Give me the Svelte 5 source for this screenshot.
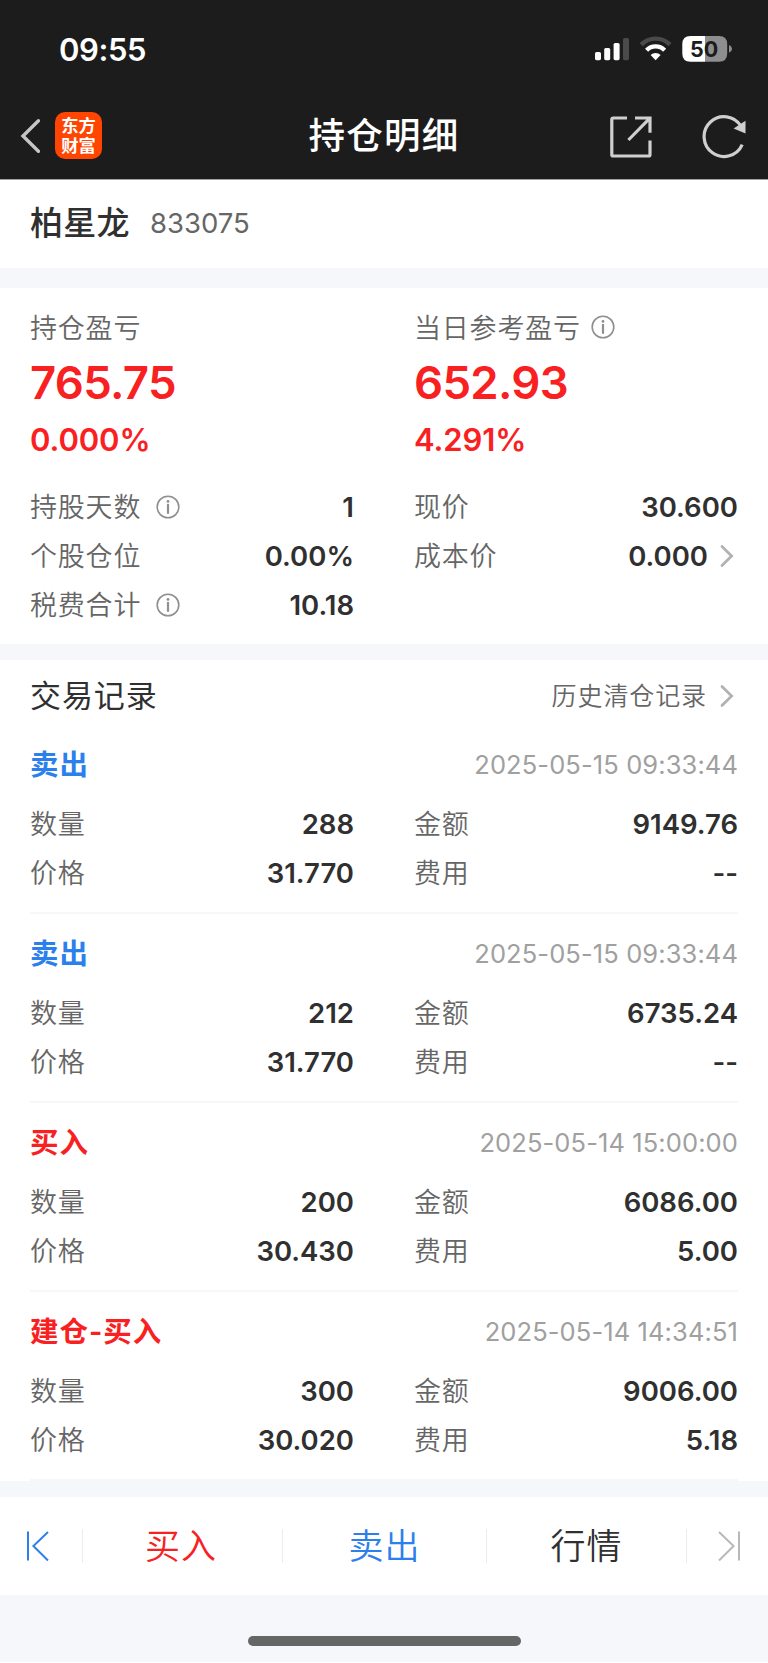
<script>
  const profits = [
    { label: '持仓盈亏', value: '765.75', percent: '0.000%', info: false },
    { label: '当日参考盈亏', value: '652.93', percent: '4.291%', info: true }
  ];

  const facts = [
    { label: '持股天数', value: '1', info: true },
    { label: '现价', value: '30.600' },
    { label: '个股仓位', value: '0.00%' },
    { label: '成本价', value: '0.000', link: true },
    { label: '税费合计', value: '10.18', info: true }
  ];

  const records = [
    { type: '卖出', side: 'sell', time: '2025-05-15 09:33:44', count: '288', amount: '9149.76', price: '31.770', fee: '--' },
    { type: '卖出', side: 'sell', time: '2025-05-15 09:33:44', count: '212', amount: '6735.24', price: '31.770', fee: '--' },
    { type: '买入', side: 'buy', time: '2025-05-14 15:00:00', count: '200', amount: '6086.00', price: '30.430', fee: '5.00' },
    { type: '建仓-买入', side: 'buy', time: '2025-05-14 14:34:51', count: '300', amount: '9006.00', price: '30.020', fee: '5.18' }
  ];
</script>

{#snippet infoIcon()}
  <svg class="info" width="24" height="24" viewBox="0 0 24 24" fill="none" stroke="#8f8f8f">
    <circle cx="12" cy="12" r="10.8" stroke-width="1.6" />
    <path d="M12 9.8V18" stroke-width="2.2" stroke-linecap="round" />
    <circle cx="12" cy="6.4" r="1.4" fill="#8f8f8f" stroke="none" />
  </svg>
{/snippet}

{#snippet chevron()}
  <svg class="chevron" width="14" height="24" viewBox="0 0 14 24" fill="none" stroke="#b2b2b2" stroke-width="2.8">
    <path d="M2 2.4L11.6 12L2 21.6" stroke-linecap="round" />
  </svg>
{/snippet}

{#snippet pair(label, value)}
  <div class="pair"><span class="label">{label}</span><b>{value}</b></div>
{/snippet}

<div class="page">
  <header>
    <div class="status">
      <span class="clock">09:55</span>
      <svg width="138" height="28" viewBox="595 35 138 28">
        <g fill="#fff">
          <rect x="595" y="52" width="6" height="8.2" rx="1.6" />
          <rect x="604.2" y="48" width="6" height="12.2" rx="1.6" />
          <rect x="613.6" y="43" width="6" height="17.2" rx="1.6" />
        </g>
        <rect x="623" y="38" width="6" height="22.2" rx="1.6" fill="#4a4a4a" />
        <g fill="none" stroke-width="4.4">
          <path d="M641.2 44.6A20.3 20.3 0 0 1 670 44.6" stroke="#4a4a4a" />
          <path d="M646.6 50.2A12.6 12.6 0 0 1 664.6 50.2" stroke="#fff" />
        </g>
        <path d="M655.6 60.2L650.6 55.1A7.2 7.2 0 0 1 660.6 55.1Z" fill="#fff" />
        <path d="M705 36H690.5Q682.3 36 682.3 44.2V53.5Q682.3 61.7 690.5 61.7H705Z" fill="#fff" />
        <path d="M705 36H719Q727.2 36 727.2 44.2V53.5Q727.2 61.7 719 61.7H705Z" fill="#8e8e8e" />
        <path d="M729 45Q732 46.3 732 48.9T729 52.8Z" fill="#8e8e8e" />
        <text x="704.2" y="56.6" text-anchor="middle" font-family="Inter" font-size="21.5" font-weight="700" fill="#1c1c1c">50</text>
      </svg>
    </div>
    <div class="titlebar">
      <div class="back">
        <svg width="20" height="36" viewBox="0 0 20 36" fill="none" stroke="#c6c6c6" stroke-width="3.4">
          <path d="M18.4 2.8L3 18L18.4 33.2" stroke-linecap="round" />
        </svg>
        <span class="logo">东方<br />财富</span>
      </div>
      <h1>持仓明细</h1>
      <div class="tools">
        <svg width="42" height="42" viewBox="0 0 42 42" fill="none" stroke="#cfcfcf" stroke-width="3.2">
          <path d="M17 2H3.4Q1.8 2 1.8 3.6V38.4Q1.8 40 3.4 40H38.4Q40 40 40 38.4V24.4" />
          <path d="M25 2H40V16.8M39.4 2.6L18.4 24" />
        </svg>
        <svg width="44" height="44" viewBox="702 115 44 44">
          <path d="M742.2 144.6A19.9 19.9 0 1 1 741 126.2" fill="none" stroke="#cfcfcf" stroke-width="3.2" />
          <path d="M745.5 120.8V133.4L733.6 128.6Z" fill="#cfcfcf" />
        </svg>
      </div>
    </div>
  </header>

  <section class="stock">
    <h2>柏星龙</h2>
    <span class="code">833075</span>
  </section>

  <section class="summary">
    <div class="columns">
      {#each profits as p}
        <div class="profit">
          <div class="caption"><span class="label">{p.label}</span>{#if p.info}{@render infoIcon()}{/if}</div>
          <div class="value">{p.value}</div>
          <div class="percent">{p.percent}</div>
        </div>
      {/each}
    </div>
    <div class="columns facts">
      {#each facts as f}
        <div class="pair">
          <span class="label">{f.label}</span>
          {#if f.info}{@render infoIcon()}{/if}
          <b>{f.value}</b>
          {#if f.link}{@render chevron()}{/if}
        </div>
      {/each}
    </div>
  </section>

  <section class="trades">
    <div class="heading">
      <h3>交易记录</h3>
      <span class="history">历史清仓记录</span>
      {@render chevron()}
    </div>
    {#each records as r}
      <article>
        <div class="top">
          <strong class={r.side}>{r.type}</strong>
          <time>{r.time}</time>
        </div>
        <div class="columns">
          {@render pair('数量', r.count)}
          {@render pair('金额', r.amount)}
          {@render pair('价格', r.price)}
          {@render pair('费用', r.fee)}
        </div>
      </article>
    {/each}
  </section>

  <nav>
    <div class="edge first">
      <svg width="24" height="32" viewBox="0 0 24 32" fill="none" stroke="#2c80ec" stroke-width="2">
        <path d="M2 1.5V30.5M22 2L7.4 16L22 30.5" />
      </svg>
    </div>
    <div class="action buy">买入</div>
    <div class="action sell">卖出</div>
    <div class="action">行情</div>
    <div class="edge last">
      <svg width="24" height="32" viewBox="0 0 24 32" fill="none" stroke="#b8b8b8" stroke-width="2">
        <path d="M22 1.5V30.5M2 2L16.6 16L2 30.5" />
      </svg>
    </div>
  </nav>
  <footer><i></i></footer>
</div>

<style>
  :global(body) {
    background: #fff;
  }
  .page {
    width: 768px;
    height: 1663px;
    box-sizing: border-box;
    display: flex;
    flex-direction: column;
    font-family: Inter, 'Noto Sans CJK SC', sans-serif;
    color: #303030;
    overflow: hidden;
  }
  h1, h2, h3 {
    margin: 0;
  }
  svg {
    flex: none;
    display: block;
  }
  header {
    height: 180px;
    box-sizing: border-box;
    flex: none;
    background: #1c1c1c;
    border-bottom: 1px solid #a0a0a0;
    color: #fff;
  }
  .status {
    height: 98px;
    display: flex;
    align-items: center;
    justify-content: space-between;
    padding: 0 35px 0 59px;
  }
  .clock {
    font-size: 31px;
    font-weight: 600;
    letter-spacing: -0.4px;
  }
  .titlebar {
    height: 77px;
    display: grid;
    grid-template-columns: 1fr auto 1fr;
    align-items: center;
    padding: 0 22px 0 20px;
  }
  .back {
    display: flex;
    align-items: center;
    gap: 15px;
    padding-bottom: 2px;
  }
  .logo {
    width: 47px;
    height: 47px;
    box-sizing: border-box;
    padding-top: 4px;
    border-radius: 10px;
    background: #ff4500;
    text-align: center;
    font-family: 'Liberation Sans', 'Noto Sans CJK SC', sans-serif;
    font-size: 17.3px;
    font-weight: 700;
    line-height: 20px;
  }
  h1 {
    font-size: 36.5px;
    font-weight: 500;
    letter-spacing: 1.3px;
    line-height: 50px;
    padding: 0 0 1px 2px;
  }
  .tools {
    display: flex;
    align-items: center;
    justify-content: flex-end;
    gap: 50px;
  }
  .stock {
    height: 88px;
    flex: none;
    display: flex;
    align-items: center;
    padding: 0 30px 2px;
    box-sizing: border-box;
  }
  h2 {
    font-size: 33px;
    font-weight: 500;
    letter-spacing: 0.3px;
    line-height: 40px;
  }
  .code {
    margin-left: 20px;
    font-size: 27.5px;
    color: #666;
  }
  .summary {
    height: 376px;
    box-sizing: border-box;
    flex: none;
    border-top: 20px solid #f6f7fa;
    padding: 19px 30px 0;
  }
  .columns {
    display: grid;
    grid-template-columns: 324px 324px;
    column-gap: 60px;
  }
  .label {
    font-size: 27px;
    letter-spacing: 0.8px;
    color: #666;
    font-weight: 350;
  }
  .pair .label {
    padding-top: 1px;
  }
  .caption {
    height: 40px;
    display: flex;
    align-items: center;
  }
  .caption .label {
    padding-bottom: 2px;
  }
  .info {
    margin-left: 15px;
  }
  .caption .info {
    margin-left: 10px;
  }
  .value {
    height: 70px;
    line-height: 71px;
    font-size: 45.5px;
    font-weight: 600;
    letter-spacing: -0.7px;
    color: #f92022;
  }
  .percent {
    height: 46px;
    line-height: 46px;
    font-size: 31px;
    font-weight: 600;
    letter-spacing: -0.1px;
    color: #f92022;
  }
  .facts {
    margin-top: 19.5px;
  }
  .pair {
    height: 49.2px;
    display: flex;
    align-items: center;
    line-height: 40px;
  }
  b {
    margin-left: auto;
    padding-bottom: 1px;
    font-size: 27.5px;
    font-weight: 600;
  }
  .chevron {
    margin: 0 4px 0 12px;
  }
  .trades {
    height: 837px;
    box-sizing: border-box;
    flex: none;
    border-top: 16px solid #f6f7fa;
    padding: 0 30px;
  }
  .heading {
    height: 65px;
    box-sizing: border-box;
    padding-top: 6px;
    display: flex;
    align-items: center;
  }
  h3 {
    font-size: 31px;
    font-weight: 400;
    letter-spacing: 0.9px;
    line-height: 40px;
  }
  .history {
    margin: 0 1px 0 auto;
    padding-bottom: 3px;
    font-size: 25px;
    letter-spacing: 0.9px;
    color: #666;
    font-weight: 350;
  }
  article {
    height: 189px;
    box-sizing: border-box;
    padding-top: 20px;
    border-bottom: 2px solid #f6f7f8;
  }
  .top {
    height: 54.5px;
    display: flex;
    justify-content: space-between;
    line-height: 40px;
  }
  strong {
    font-size: 28.5px;
    font-weight: 700;
    letter-spacing: 1px;
  }
  time {
    font-size: 25.5px;
    letter-spacing: 0.1px;
    color: #a0a0a0;
  }
  .buy {
    color: #f92022;
  }
  .sell {
    color: #2c80ec;
  }
  nav {
    height: 114px;
    box-sizing: border-box;
    flex: none;
    border-top: 16px solid #f6f7fa;
    display: grid;
    grid-template-columns: 82px 200px 204px 200px 82px;
    align-items: center;
  }
  .edge,
  .action {
    height: 34px;
    box-sizing: border-box;
    display: flex;
    align-items: center;
  }
  .edge {
    padding-left: 26px;
  }
  .edge.last {
    padding-left: 30px;
    border-left: 1px solid #ececec;
  }
  .action {
    justify-content: center;
    padding-bottom: 5px;
    border-left: 1px solid #ececec;
    font-size: 35px;
    font-weight: 350;
    letter-spacing: 1px;
  }
  .action.buy {
    padding-right: 3px;
  }
  footer {
    height: 67px;
    flex: none;
    background: #f6f7fa;
    display: flex;
    justify-content: center;
    align-items: flex-end;
  }
  footer i {
    width: 273px;
    height: 10px;
    margin-bottom: 16px;
    border-radius: 5px;
    background: #666;
  }
</style>
